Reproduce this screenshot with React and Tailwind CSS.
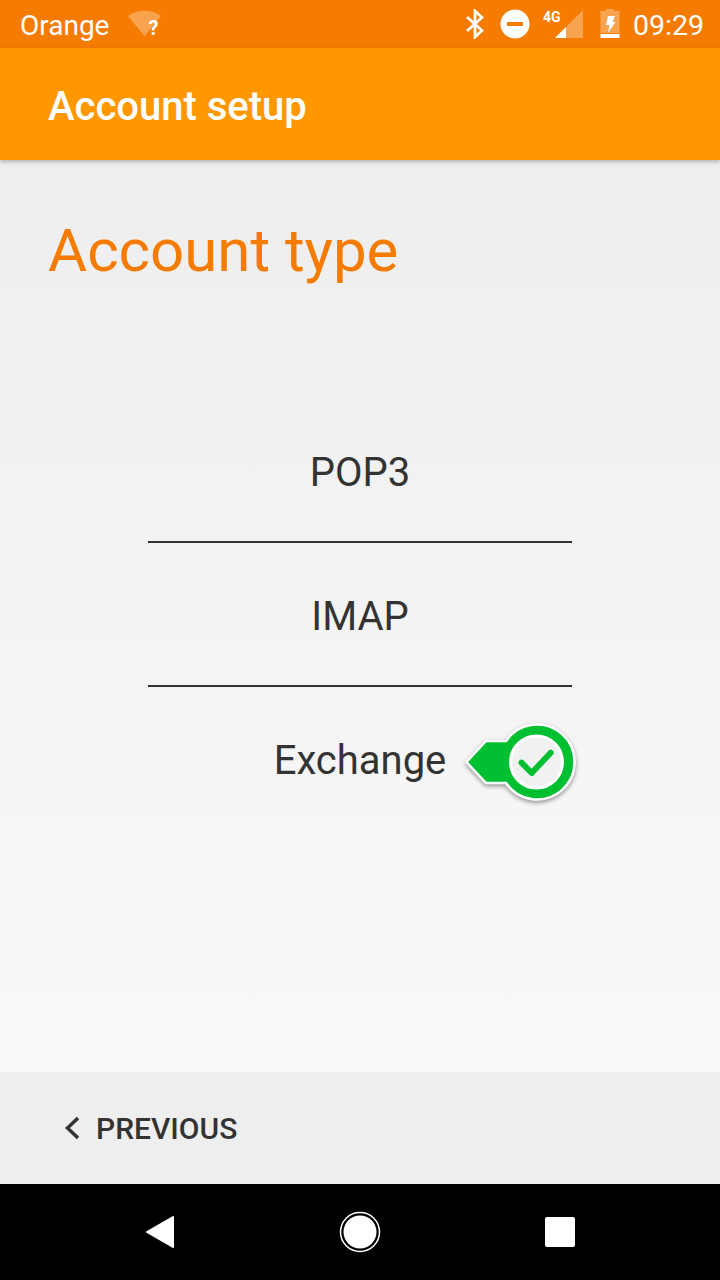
import React from 'react';

const BluetoothIcon = () => (
  <svg width="18" height="30" viewBox="0 0 18 30" fill="none" stroke="white" strokeWidth="2.800">
    <path d="M1 8 L16 21.500 L9 28 V2 L16 8.500 L1 22" />
  </svg>
);

const DndIcon = () => (
  <svg width="30" height="30" viewBox="0 0 30 30">
    <circle cx="15" cy="15" r="14.500" fill="white" />
    <rect x="7" y="13" width="16" height="4" fill="#F57C00" />
  </svg>
);

const SignalIcon = () => (
  <svg width="40" height="32" viewBox="0 0 40 32">
    <path d="M12 30 L40 2 V30 Z" fill="white" fillOpacity="0.3" />
    <path d="M12 30 L23 19 V30 Z" fill="white" />
    <text x="0" y="14" fontSize="14" fontWeight="700" fill="white" fontFamily="Roboto, sans-serif">4G</text>
  </svg>
);

const BatteryIcon = () => (
  <svg width="20" height="30" viewBox="0 0 20 30">
    <path d="M6 0 H14 V2 H19.500 V24 H0.500 V2 H6 Z" fill="white" fillOpacity="0.3" />
    <rect x="0.500" y="25" width="19" height="4" fill="white" />
    <path d="M8 7 H15 L12.500 13 H15.500 L8 24 L9.500 16 H6 Z" fill="white" />
  </svg>
);

const WifiUnknownIcon = () => (
  <div className="relative w-[34px] h-[28px]">
    <svg width="34" height="28" viewBox="0 0 34 28" className="block">
      <path d="M0 6 C9 -1 24 -1 33 6 L16.500 26 Z" fill="white" fillOpacity="0.3" />
    </svg>
    <span className="absolute left-[20px] top-[7px] text-[20px] leading-[22px] font-bold text-white">?</span>
  </div>
);

const SelectedBadge = () => (
  <svg width="124" height="90" viewBox="0 0 124 90" className="absolute left-[460px] top-[30px] drop-shadow-[0_2px_2px_rgba(0,0,0,0.4)]">
    <path d="M6.500 45 L26 24 H46 A37.500 37.500 0 1 1 46 66 H26 Z" fill="#00BF30" stroke="white" strokeWidth="2.500" />
    <circle cx="76.500" cy="45" r="26" fill="#F1F1F1" stroke="white" strokeWidth="3" />
    <path d="M61.500 45.700 L71.700 56 L90.700 35.700" fill="none" stroke="#00BF30" strokeWidth="6" strokeLinecap="round" strokeLinejoin="round" />
  </svg>
);

const OptionRow = ({ label, divider, selected }) => (
  <div className="relative">
    <div className="h-[144px] pt-[4px] flex items-center justify-center text-[40px] text-[#333333]">
      {label}
    </div>
    {selected && <SelectedBadge />}
    {divider && <div className="absolute left-[148px] bottom-0 w-[424px] h-[2px] bg-[#333333]"></div>}
  </div>
);

export default function App() {
  return (
    <div className="w-[720px] h-[1280px] flex flex-col overflow-hidden font-['Roboto',sans-serif]">

      {/* Status bar */}
      <div className="h-[48px] shrink-0 bg-[#F57C00] flex items-center pl-[20px] pr-[16px] text-white">
        <span className="mt-[4px] text-[28px] leading-none">Orange</span>
        <div className="ml-[19px]"><WifiUnknownIcon /></div>
        <div className="ml-auto flex items-center">
          <BluetoothIcon />
          <div className="ml-[16px]"><DndIcon /></div>
          <div className="ml-[13px]"><SignalIcon /></div>
          <div className="ml-[17px]"><BatteryIcon /></div>
          <span className="ml-[13px] mt-[4px] text-[28.500px] leading-none">09:29</span>
        </div>
      </div>

      {/* App bar */}
      <div className="relative z-10 h-[112px] shrink-0 bg-[#FF9800] flex items-center pt-[6px] px-[48px] shadow-[0_2px_4px_rgba(0,0,0,0.25)]">
        <span className="text-[40px] font-medium text-white">Account setup</span>
      </div>

      {/* Content */}
      <div className="flex-1 bg-gradient-to-b from-[#EEEEEE] to-[#F9F9F9] flex flex-col">
        <h1 className="mt-[53px] ml-[48px] text-[60px] leading-[76px] text-[#F57C00]">Account type</h1>
        <div className="mt-[110px]">
          <OptionRow label="POP3" divider />
          <OptionRow label="IMAP" divider />
          <OptionRow label="Exchange" selected />
        </div>
      </div>

      {/* Previous button */}
      <div className="h-[112px] shrink-0 bg-[#EEEEEE] flex items-center pl-[64px]">
        <svg width="16" height="24" viewBox="0 0 16 24" fill="none" stroke="#333333" strokeWidth="3.500">
          <path d="M14 2 L3.500 12 L14 22" />
        </svg>
        <span className="ml-[16px] text-[30px] font-medium text-[#333333]">PREVIOUS</span>
      </div>

      {/* Nav bar */}
      <div className="h-[96px] shrink-0 bg-black flex items-center justify-center">
        <div className="w-[430px] flex items-center justify-between">
          <svg width="30" height="34" viewBox="0 0 30 34">
            <path d="M28 2 V32 L2 17 Z" fill="white" stroke="white" strokeWidth="2" strokeLinejoin="round" />
          </svg>
          <svg width="42" height="42" viewBox="0 0 42 42">
            <circle cx="21" cy="21" r="19.500" fill="none" stroke="white" strokeWidth="1.500" />
            <circle cx="21" cy="21" r="16.500" fill="white" />
          </svg>
          <div className="w-[30px] h-[30px] bg-white rounded-[2px]"></div>
        </div>
      </div>
    </div>
  );
}
